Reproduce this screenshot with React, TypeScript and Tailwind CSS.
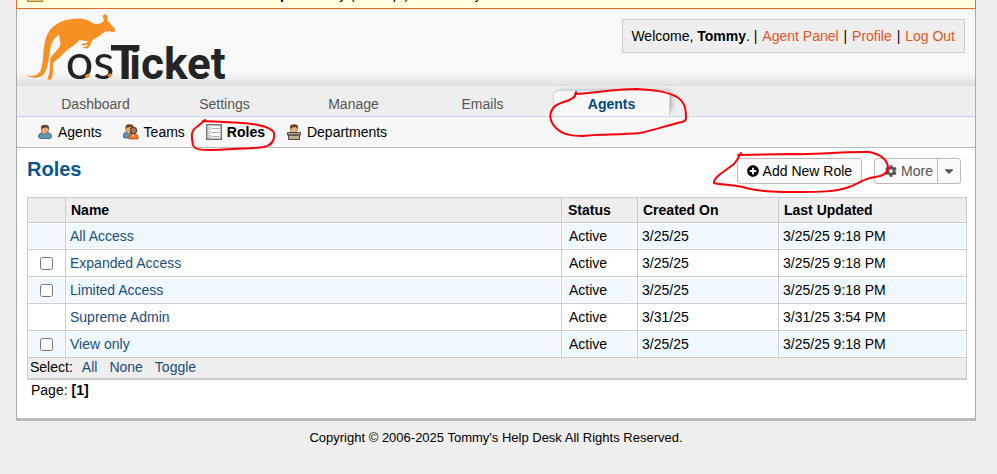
import React from "react";
import { FaPlusCircle, FaCog, FaCaretDown } from "react-icons/fa";

type Role = { name: string; created: string; updated: string; selectable: boolean };

const roles: Role[] = [
  { name: "All Access", created: "3/25/25", updated: "3/25/25 9:18 PM", selectable: false },
  { name: "Expanded Access", created: "3/25/25", updated: "3/25/25 9:18 PM", selectable: true },
  { name: "Limited Access", created: "3/25/25", updated: "3/25/25 9:18 PM", selectable: true },
  { name: "Supreme Admin", created: "3/31/25", updated: "3/31/25 3:54 PM", selectable: false },
  { name: "View only", created: "3/25/25", updated: "3/25/25 9:18 PM", selectable: true },
];

const tabs = ["Dashboard", "Settings", "Manage", "Emails", "Agents"];

function Logo() {
  return (
    <svg viewBox="75 39 615 210" className="h-[70px] w-[205px]" role="img" aria-label="osTicket">
      <path
        fill="#f79022"
        d="M78 225C100 232 116 226 123 208C132 182 128 146 137 116C148 78 182 57 226 56C250 55 264 60 276 68C288 75 302 72 311 64C313 60 308 54 309 47C311 42 316 41 320 45C324 51 323 58 323 64C329 67 333 72 337 79C342 82 346 87 345 92C343 97 337 97 328 94C320 93 313 96 306 101C299 108 288 114 278 120C274 126 273 134 268 140C262 147 256 146 249 144L250 141C257 141 261 139 264 134C257 136 250 137 243 135L244 132C253 132 260 130 265 124C256 123 247 121 238 120C231 133 212 141 196 155C184 166 176 178 161 186C157 198 160 213 158 224C156 232 154 239 149 240L142 237C148 226 149 212 150 198C151 186 149 176 155 168C164 158 175 148 180 138C184 126 176 114 178 104C163 112 155 126 151 146C147 172 145 196 134 220C124 237 96 236 78 225Z"
      />
      <text y="236" fill="#222426" fontFamily="Roboto" fontWeight="700">
        <tspan x="197" fontFamily="Lato" fontWeight="400" fontSize="146">os</tspan>
        <tspan x="330" fontSize="147">T</tspan>
        <tspan x="388" fontSize="132">icket</tspan>
      </text>
      <path d="M257 231L268 224M325 229L335 223" stroke="#f79022" strokeWidth="10" />
    </svg>
  );
}

function Person({ x = 0, y = 0, shirt, skin }: { x?: number; y?: number; shirt: string; skin: string }) {
  return (
    <g transform={`translate(${x} ${y})`}>
      <path d="M.5 12q0-2.500 4-3.500h5q4 1 4 3.500 0 2.500-2 2.500h-9q-2 0-2-2.500z" fill={shirt} stroke="#33566b" strokeWidth=".8" />
      <path d="M3.500 5.500q0-3.500 3.500-3.500t3.500 3.500-3.500 4.500-3.500-4.500z" fill={skin} stroke="#7a4a22" strokeWidth=".6" />
      <path d="M3 5.500V3Q3.500 .7 7 .7t4 2.300v2.500L9 3.500 5 4z" fill="#70401c" />
    </g>
  );
}

function AgentIcon() {
  return (
    <svg viewBox="0 0 16 16" className="size-4" aria-hidden="true">
      <Person x={1} shirt="#5f96b5" skin="#e5ad79" />
    </svg>
  );
}

function TeamIcon() {
  return (
    <svg viewBox="0 0 16 16" className="size-4" aria-hidden="true">
      <Person x={-0.5} y={-0.5} shirt="#5f96b5" skin="#e5ad79" />
      <path d="M6 15v-2.500q0-2 3-2.500h3q3 .5 3 2.500V15z" fill="#f0762b" stroke="#b64a17" strokeWidth=".8" />
      <circle cx="10.500" cy="6.500" r="3.200" fill="#a5794f" stroke="#3f2b1c" />
      <path d="M9.500 10.500h2l-1 3z" fill="#fff" />
    </svg>
  );
}

function RoleIcon() {
  return (
    <svg viewBox="0 0 16 16" className="size-4" aria-hidden="true">
      <path d="M.75.750h14.500v14.500H.750z" fill="#f8f8f8" stroke="#777" strokeWidth="1.500" />
      <path d="M6 4.500h7.500M6 8.500h7.500M6 12.500h7.500" stroke="#aaa" />
      <path d="M2.500 3.500h2v2h-2zM2.500 7.500h2v2h-2zM2.500 11.500h2v2h-2z" fill="#fff" stroke="#aaa" strokeWidth=".7" />
    </svg>
  );
}

function DepartmentIcon() {
  return (
    <svg viewBox="0 0 16 16" className="size-4" aria-hidden="true">
      <path d="M4.500 5q0-3 3.500-3t3.500 3-3.500 4.500-3.500-4.500z" fill="#e9b07a" stroke="#9a6332" strokeWidth=".6" />
      <path d="M4 5V2.500Q4.500 .3 8 .3t4 2.200V5l-2-2-4 .5z" fill="#70401c" />
      <path d="M1.500 8.500h13V11h-13zM2.500 11h11v4.500h-11z" fill="#c5ab90" stroke="#4b4540" />
    </svg>
  );
}

const subItems = [
  { label: "Agents", icon: <AgentIcon /> },
  { label: "Teams", icon: <TeamIcon /> },
  { label: "Roles", icon: <RoleIcon />, active: true },
  { label: "Departments", icon: <DepartmentIcon /> },
];

function Annotations() {
  return (
    <svg
      className="pointer-events-none absolute top-0 left-0 h-[210px] w-[997px]"
      viewBox="0 0 997 210"
      fill="none"
      stroke="#fb0007"
      strokeWidth="2"
      strokeLinecap="round"
      strokeLinejoin="round"
      aria-hidden="true"
    >
      <path d="M205 120L198 126C191 130 191 135 193 145C195 150 202 150 211 150C230 149 250 149 264 147C272 145 275 140 274 133C272 128 264 126 252 124C236 122 220 122 203 121" />
      <path d="M576 92L575 96C569 103 560 101 554 107C548 114 550 122 556 128C563 135 572 136 583 136C600 134 620 135 640 133C655 130 668 125 682 122Q686 121 686 118C686 109 685 102 677 97C666 91 653 90 636 89C612 89 596 93 575 94" />
      <path d="M741 153L737 160L734 164L719 175Q713 181 714 183C722 185 737 185 746 188C762 192 780 192 800 192C818 192 836 192 849 187C858 184 862 179 875 177C885 176 888 172 888 167C887 159 879 154 869 152C845 151 819 155 794 154L738 155" />
    </svg>
  );
}

const tabBase = "flex h-[26px] items-center justify-center rounded-t-[5px] border border-b-0";
const cell = "border border-[#ccc] px-1 py-0";
const blueLink = "text-[#184e81] hover:underline";
const orangeLink = "px-px text-[#e65524] hover:underline";

export default function App() {
  return (
    <div className="relative min-h-screen bg-[#eee] font-['Liberation_Sans',Arial,sans-serif] text-sm text-black">
      <div className="mr-[21px] ml-4">
        <div className="flex h-[9px] items-end overflow-hidden border border-t-0 border-[#f26522] bg-[#ffffdd] px-2.5 pb-1.5">
          <p className="flex shrink-0 items-end gap-4">
            <svg viewBox="0 0 16 16" className="size-4 shrink-0" aria-hidden="true">
              <path d="M.75.750h14.500v14.500H.750z" fill="#fffbe8" stroke="#c08a2c" strokeWidth="1.500" />
            </svg>
            <span className="leading-4">
              Please take a minute to delete <strong>setup</strong> directory (../setup/) for security reasons.
            </span>
          </p>
        </div>

        <div className="border-x border-b-3 border-x-[#aaa] border-b-[#bbb] bg-white">
          <header className="flex h-[77px] items-start justify-between bg-[linear-gradient(#f8f8f8_82%,#dfdfdf)] pr-2.5 pl-2">
            <a href="#home" className="mt-1">
              <Logo />
            </a>
            <p className="mt-2.5 border border-[#ccc] bg-[#eee] px-2 py-1.5 leading-5">
              Welcome, <strong>Tommy</strong>. | <a href="#agent-panel" className={orangeLink}>Agent Panel</a> |{" "}
              <a href="#profile" className={orangeLink}>Profile</a> |{" "}
              <a href="#logout" className={orangeLink}>Log Out</a>
            </p>
          </header>

          <nav aria-label="Main" className="border-b border-[#c5d9ec] bg-[#eee] pt-1 pl-3.5">
            <ul className="flex">
              {tabs.map((t) => (
                <li key={t} className="w-[129px] px-1.5">
                  <a
                    href={"#" + t.toLowerCase()}
                    className={
                      t === "Agents"
                        ? `${tabBase} border-[#c5d9ec] bg-[#f7f7f7] font-bold text-[#004a80] shadow-[4px_-2px_5px_-3px_#999]`
                        : `${tabBase} border-transparent text-[#555]`
                    }
                  >
                    {t}
                  </a>
                </li>
              ))}
            </ul>
          </nav>

          <nav aria-label="Agents" className="relative border-b border-[#bbb] bg-[#f7f7f7] pl-5">
            <ul className="flex h-[30px] items-center gap-[21px]">
              {subItems.map((s) => (
                <li key={s.label}>
                  <a href={"#" + s.label} className={`flex items-center gap-[5px] ${s.active ? "font-bold" : ""}`}>
                    {s.icon}
                    {s.label}
                  </a>
                </li>
              ))}
            </ul>
          </nav>

          <main className="pt-2.5 pr-2 pb-4 pl-2.5">
            <div className="flex items-start pr-1.5 pb-[13px]">
              <h1 className="mr-auto text-xl leading-[22px] font-bold text-[#0a568e]">Roles</h1>
              <button
                type="button"
                className="mr-3 flex h-[26px] items-center gap-1 rounded-[3px] border border-[#bbb] bg-[#fafafa] px-[9px] text-sm"
              >
                <FaPlusCircle className="size-3" />
                Add New Role
              </button>
              <button
                type="button"
                className="flex h-[26px] items-center rounded-[3px] border border-[#bbb] bg-[#fafafa] text-sm text-[#555]"
              >
                <span className="flex h-full items-center gap-1 border-r border-[#bbb] pr-1 pl-2.5">
                  <FaCog className="size-3" />
                  More
                </span>
                <FaCaretDown className="mx-1 size-3.5" />
              </button>
            </div>

            <table className="w-full table-fixed border-collapse">
              <colgroup>
                <col className="w-[38px]" />
                <col />
                <col className="w-[76px]" />
                <col className="w-[141px]" />
                <col className="w-[188px]" />
              </colgroup>
              <thead>
                <tr className="h-[25px] bg-[#eee] text-left">
                  <th className={cell} aria-label="Selection" />
                  <th className="border border-[#ccc] px-[5px] py-0">Name</th>
                  <th className="border border-[#ccc] px-1.5 py-0">Status</th>
                  <th className="border border-[#ccc] px-[5px] py-0">Created On</th>
                  <th className="border border-[#ccc] px-[5px] py-0">Last Updated</th>
                </tr>
              </thead>
              <tbody className="[&_td]:shadow-[inset_0_0_0_1px_#fff]">
                {roles.map((r) => (
                  <tr key={r.name} className="h-[27px] odd:bg-[#f0f8ff]">
                    <td className={cell}>
                      {r.selectable && (
                        <input type="checkbox" aria-label={"Select " + r.name} className="mx-auto block size-[13px]" />
                      )}
                    </td>
                    <td className={cell}>
                      <a href="#role" className={blueLink}>{r.name}</a>
                    </td>
                    <td className="border border-[#ccc] px-[7px] py-0">Active</td>
                    <td className={cell}>{r.created}</td>
                    <td className={cell}>{r.updated}</td>
                  </tr>
                ))}
              </tbody>
              <tfoot>
                <tr className="h-[21px] bg-[#eee]">
                  <td colSpan={5} className="border border-b-2 border-[#ccc] px-0.5 py-0 leading-[19px]">
                    <span className="mr-[9px]">Select:</span>
                    <a href="#all" className={`mr-3 ${blueLink}`}>All</a>
                    <a href="#none" className={`mr-3 ${blueLink}`}>None</a>
                    <a href="#toggle" className={blueLink}>Toggle</a>
                  </td>
                </tr>
              </tfoot>
            </table>
            <p className="px-1 pb-0.5 leading-5">
              Page: <strong>[1]</strong>
            </p>
          </main>
        </div>

        <footer className="pt-2 text-center text-[13px] leading-[18px]">
          Copyright © 2006-2025 Tommy's Help Desk All Rights Reserved.
        </footer>
      </div>
      <Annotations />
    </div>
  );
}
